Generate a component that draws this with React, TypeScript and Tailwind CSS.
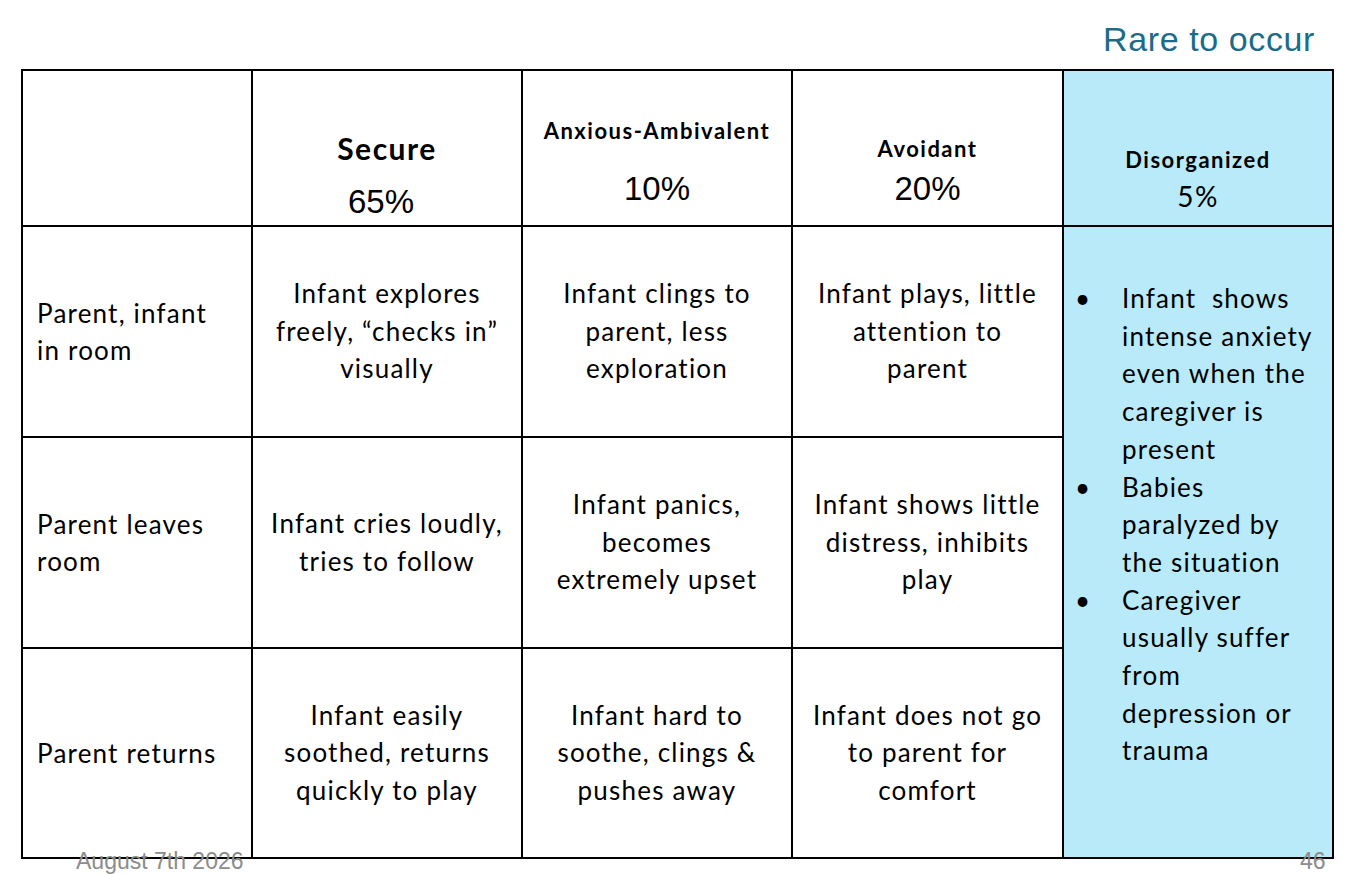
const cellFont = { fontFamily: 'Lato, "Open Sans", sans-serif' };
const arial = { fontFamily: '"Liberation Sans", Arial, sans-serif' };

const rows = [
  {
    label: ['Parent, infant', 'in room'],
    cells: [
      ['Infant explores', 'freely, \u201cchecks in\u201d', 'visually'],
      ['Infant clings to', 'parent, less', 'exploration'],
      ['Infant plays, little', 'attention to', 'parent'],
    ],
  },
  {
    label: ['Parent leaves', 'room'],
    cells: [
      ['Infant cries loudly,', 'tries to follow'],
      ['Infant panics,', 'becomes', 'extremely upset'],
      ['Infant shows little', 'distress, inhibits', 'play'],
    ],
  },
  {
    label: ['Parent returns'],
    cells: [
      ['Infant easily', 'soothed, returns', 'quickly to play'],
      ['Infant hard to', 'soothe, clings &', 'pushes away'],
      ['Infant does not go', 'to parent for', 'comfort'],
    ],
  },
];

const bullets = [
  ['Infant\u00a0 shows', 'intense anxiety', 'even when the', 'caregiver is', 'present'],
  ['Babies', 'paralyzed by', 'the situation'],
  ['Caregiver', 'usually suffer', 'from', 'depression or', 'trauma'],
];

const Lines = ({ lines }: { lines: string[] }) => (
  <>
    {lines.map((l, i) => (
      <div key={i} className="whitespace-nowrap">{l}</div>
    ))}
  </>
);

export default function App() {
  const heights = ['h-[211px]', 'h-[211px]', 'h-[210px]'];
  return (
    <div className="relative w-[1356px] h-[874px] overflow-hidden bg-white text-black">
      <div className="h-[69px] flex items-center justify-end pr-[41px] pt-[9px] text-[34px] tracking-[0.6px] text-[#1c6b88]" style={arial}>
        Rare to occur
      </div>

      <table className="ml-[21px] table-fixed border-collapse border-2 border-black" style={cellFont}>
        <colgroup>
          <col className="w-[230px]" />
          <col className="w-[270px]" />
          <col className="w-[270px]" />
          <col className="w-[271px]" />
          <col className="w-[270px]" />
        </colgroup>
        <thead>
          <tr className="h-[156px]">
            <th className="border-2 border-black" />
            <th className="border-2 border-black align-top text-center pt-[60px]">
              <div className="text-[30px] font-bold leading-[34px] tracking-[1.5px]">Secure</div>
              <div className="mt-[20px] pr-[12px] text-[33px] font-normal leading-[34px]" style={arial}>65%</div>
            </th>
            <th className="border-2 border-black align-top text-center pt-[47px]">
              <div className="text-[22px] font-bold leading-[26px] tracking-[1.5px]">Anxious-Ambivalent</div>
              <div className="mt-[28px] text-[33px] font-normal leading-[34px]" style={arial}>10%</div>
            </th>
            <th className="border-2 border-black align-top text-center pt-[65px]">
              <div className="text-[22px] font-bold leading-[26px] tracking-[1.5px]">Avoidant</div>
              <div className="mt-[10px] text-[33px] font-normal leading-[34px]" style={arial}>20%</div>
            </th>
            <th className="border-2 border-black bg-[#b8eafa] align-top text-center pt-[76px]">
              <div className="text-[22px] font-bold leading-[26px] tracking-[1.5px]">Disorganized</div>
              <div className="mt-[6px] text-[28px] font-normal leading-[34px] tracking-[1.5px]">5%</div>
            </th>
          </tr>
        </thead>
        <tbody>
          {rows.map((r, ri) => (
            <tr key={ri} className={heights[ri]}>
              <td className="border-2 border-black align-middle pl-[14px] text-[26px] leading-[37px] tracking-[1.2px]">
                <Lines lines={r.label} />
              </td>
              {r.cells.map((c, ci) => (
                <td key={ci} className="border-2 border-black align-middle text-center text-[26px] leading-[37.5px] tracking-[1.2px]">
                  <Lines lines={c} />
                </td>
              ))}
              {ri === 0 && (
                <td rowSpan={3} className="border-2 border-black bg-[#b8eafa] align-top pt-[53px] text-[26px] leading-[37.7px] tracking-[1.2px]">
                  {bullets.map((b, bi) => (
                    <div key={bi} className="flex">
                      <div className="w-[58px] pl-[11px] shrink-0">{'\u2022'}</div>
                      <div>
                        <Lines lines={b} />
                      </div>
                    </div>
                  ))}
                </td>
              )}
            </tr>
          ))}
        </tbody>
      </table>

      <div className="absolute left-[76px] top-[848px] text-[23px] leading-[26px] text-[#8c8c8c]" style={arial}>
        August 7th 2026
      </div>
      <div className="absolute left-[1300px] top-[848px] text-[23px] leading-[26px] text-[#8c8c8c]" style={arial}>
        46
      </div>
    </div>
  );
}
